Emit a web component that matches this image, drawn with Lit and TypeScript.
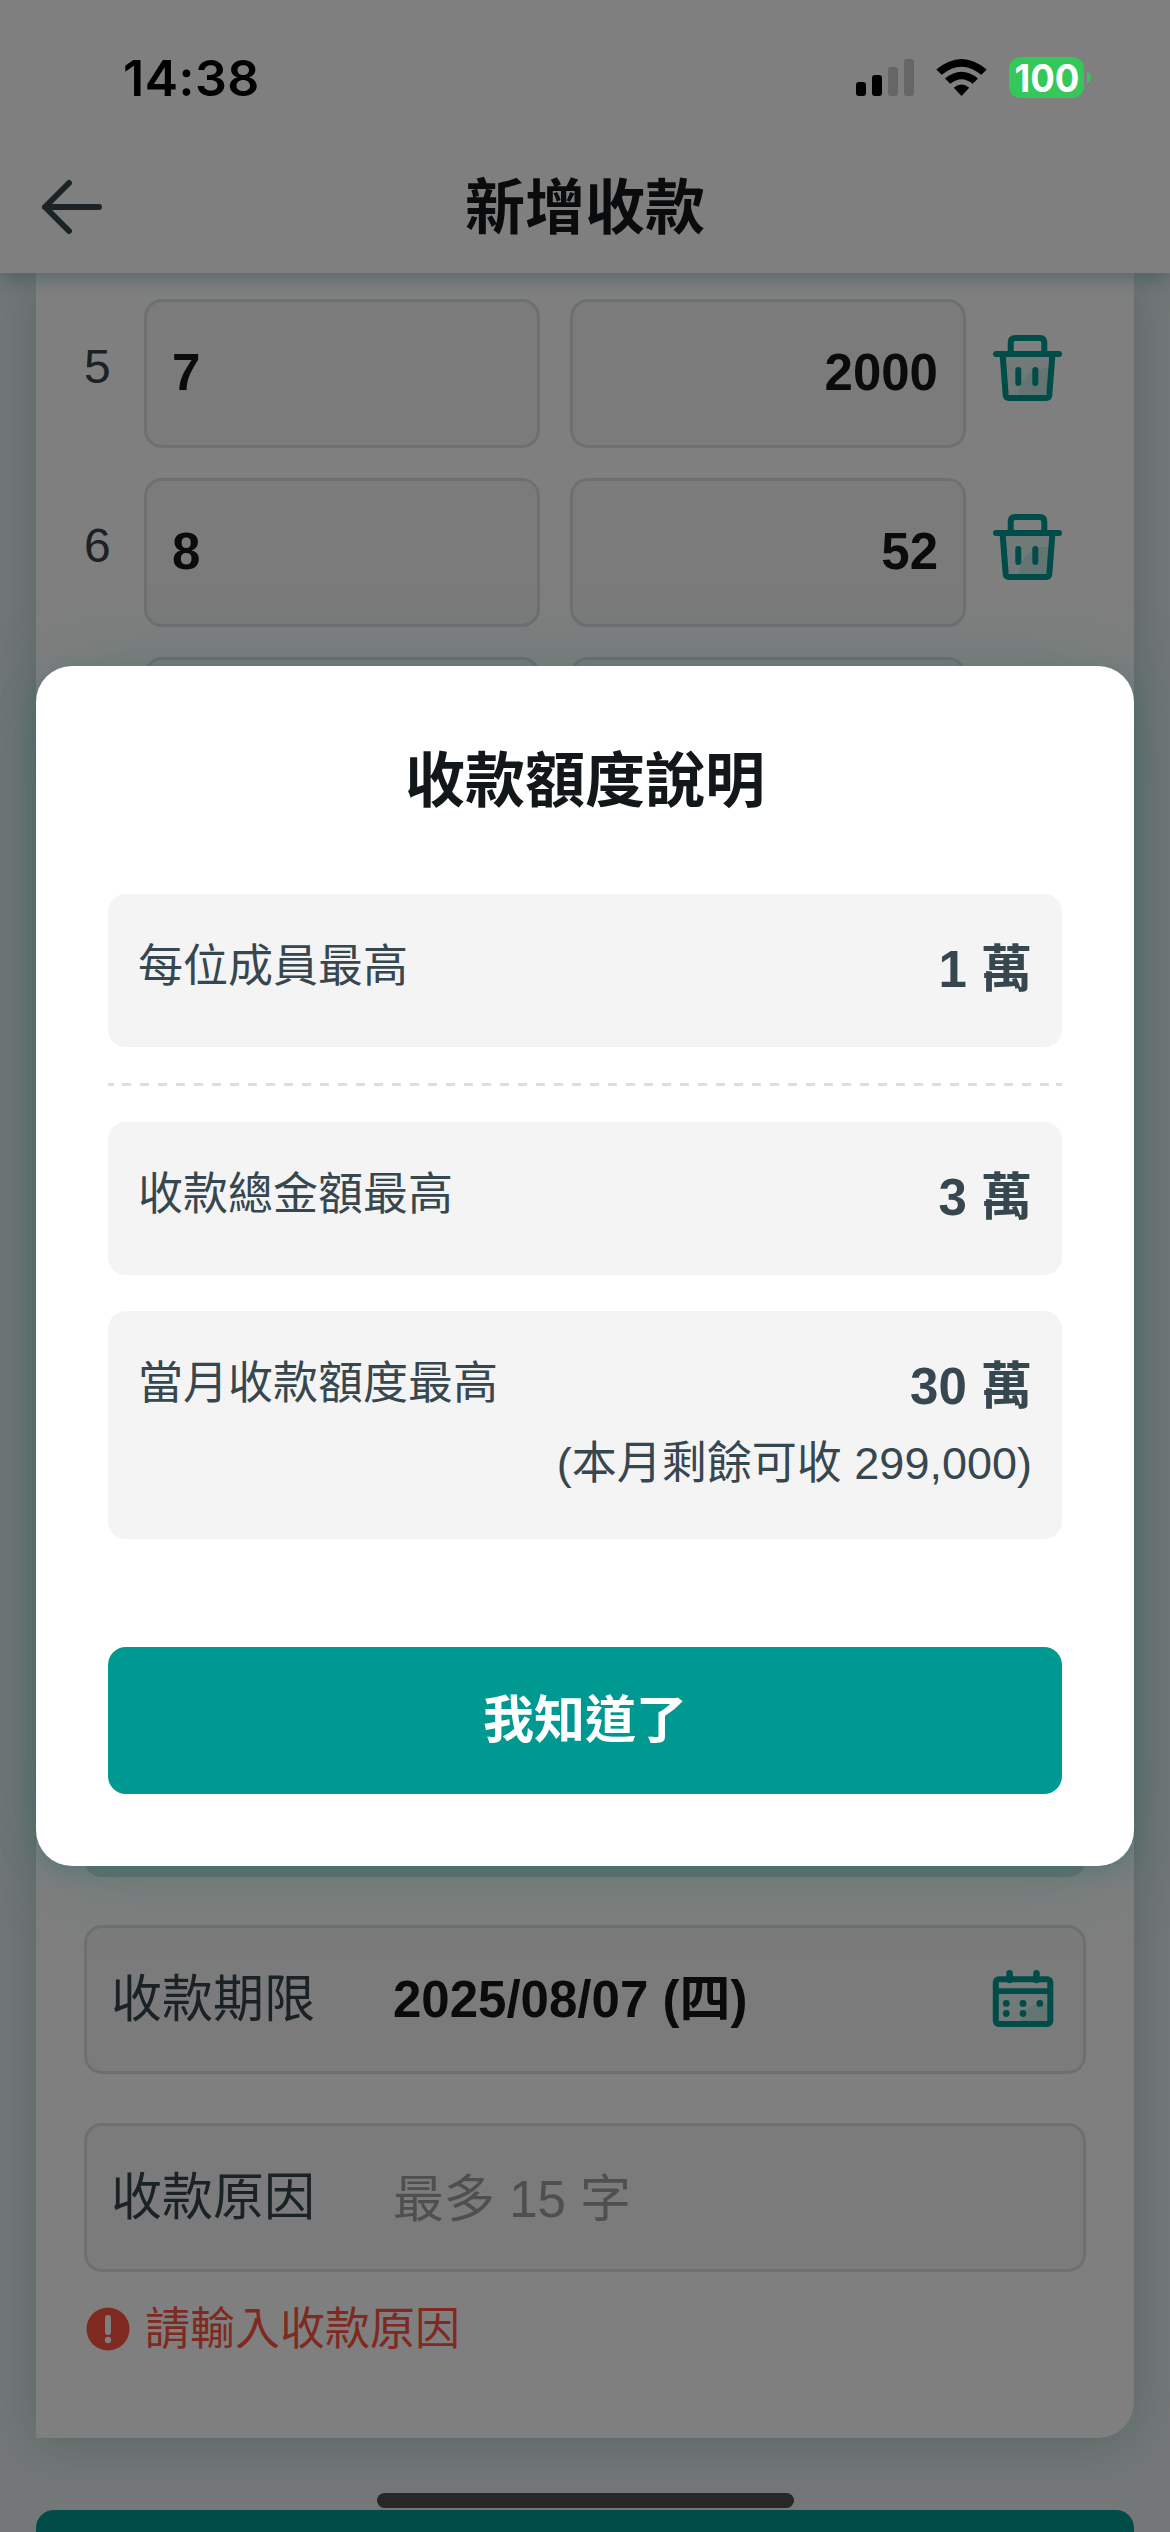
import { LitElement, html, css, svg } from "lit";
import { customElement, property } from "lit/decorators.js";

const FONT = css`"Liberation Sans", "Noto Sans CJK TC", sans-serif`;

const trashIcon = svg`
  <svg class="icon" width="100" height="100" viewBox="0 0 100 100" fill="none">
    <path d="M23 36h49.500l-3.500 42H26z" fill="#e4f5f3"/>
    <path d="M38.500 78C39 60 50 48 65 48h7L69 78z" fill="#c9e8e5"/>
    <path d="M30.700 34V22.500q0-4.500 4.500-4.500h24.600q4.500 0 4.500 4.500V34" stroke="#009991" stroke-width="6"/>
    <path d="M16 34H79" stroke="#009991" stroke-width="6" stroke-linecap="round"/>
    <path d="M22.700 36l3 39q.3 3 3 3h37.600q2.700 0 3-3l3-39" stroke="#009991" stroke-width="6"/>
    <path d="M38.300 50V63M55.300 50V63" stroke="#009991" stroke-width="6" stroke-linecap="round"/>
  </svg>`;

const calendarIcon = svg`
  <svg class="icon" width="100" height="100" viewBox="0 0 100 100" fill="none">
    <path d="M16 41h54v33H16z" fill="#e4f5f3"/>
    <path d="M39.500 74C41 61 51 53.500 64 53.500h6V74z" fill="#c9e8e5"/>
    <rect x="15.800" y="29.300" width="54.500" height="44.700" rx="3" stroke="#009991" stroke-width="6"/>
    <path d="M16 41.200H70" stroke="#009991" stroke-width="5.800"/>
    <path d="M29.600 23.300V30M56.500 23.300V30" stroke="#009991" stroke-width="6.500" stroke-linecap="round"/>
    <g fill="#009991"><circle cx="26.300" cy="53.400" r="3.400"/><circle cx="43" cy="53.400" r="3.400"/><circle cx="59.800" cy="53.400" r="3.400"/><circle cx="26.300" cy="63.500" r="3.400"/><circle cx="43" cy="63.500" r="3.400"/></g>
  </svg>`;

@customElement("status-bar")
export class StatusBar extends LitElement {
  static styles = css`
    :host { display: flex; height: 156px; box-sizing: border-box; padding: 54px 79px 0 123px; justify-content: space-between; align-items: flex-start; font-family: Inter, ${FONT}; }
    .time { font-size: 50px; font-weight: 600; line-height: 48px; color: #000; letter-spacing: 0.5px; }
    .right { display: flex; align-items: flex-start; }
  `;
  render() {
    return html`
      <span class="time">14:38</span>
      <svg class="right" width="236" height="46" viewBox="855 54 236 46">
        <rect x="856" y="82" width="10" height="14" rx="3"/>
        <rect x="872" y="75" width="10" height="21" rx="3"/>
        <rect x="888" y="67" width="10" height="29" rx="3" fill="#666"/>
        <rect x="904" y="59" width="10" height="37" rx="3" fill="#666"/>
        <path d="M936.300 69.500Q961.500 48.500 986.700 69.500L981.300 74.800Q961.500 58.500 941.700 74.800Z"/>
        <path d="M945 78.500Q961.500 65 978 78.500L972.700 83.800Q961.500 74.500 950.300 83.800Z"/>
        <path d="M953.800 87.800Q961.500 81 969.200 87.800L961.500 96Z"/>
        <rect x="1009" y="57" width="75" height="41" rx="11.500" fill="#34c759"/>
        <path d="M1087 72q4 1.500 4 5.500t-4 5.500z" fill="#34c759"/>
        <text x="1047" y="91.500" text-anchor="middle" font-size="38.500" font-weight="700" textLength="65" lengthAdjust="spacingAndGlyphs" fill="#fff">100</text>
      </svg>`;
  }
}

@customElement("member-row")
export class MemberRow extends LitElement {
  @property() no = "";
  @property() name = "";
  @property() amount = "";
  static styles = css`
    :host { display: flex; height: 149px; font-family: ${FONT}; }
    .no { width: 60px; font-size: 48px; line-height: 136px; color: #34454d; }
    .box { box-sizing: border-box; width: 396px; border: 3px solid #dae0e4; border-radius: 18px; background: #f6f6f6; padding: 0 25px; font-size: 51px; font-weight: 700; line-height: 141px; color: #121719; }
    .amount { margin-left: 30px; text-align: right; }
    .icon { margin: 21px 0 0 14px; flex: none; }
  `;
  render() {
    return html`<span class="no">${this.no}</span>
      <div class="box">${this.name}</div>
      <div class="box amount">${this.amount}</div>
      ${trashIcon}`;
  }
}

@customElement("limit-dialog")
export class LimitDialog extends LitElement {
  static styles = css`
    :host { display: flex; flex-direction: column; box-sizing: border-box; width: 1098px; height: 1200px; padding: 72px; background: #fff; border-radius: 36px; font-family: ${FONT}; color: #37474f; }
    h2 { margin: 0; height: 156px; text-align: center; font-size: 60px; line-height: 88px; color: #121719; }
    .item { box-sizing: border-box; height: 153px; padding: 37px 30px 0; background: #f4f4f4; border-radius: 18px; }
    .tall { height: 228px; margin-top: 36px; }
    .line { display: flex; justify-content: space-between; }
    .label { font-size: 45px; line-height: 72px; }
    .value { font-size: 51px; line-height: 78px; font-weight: 700; }
    .note { font-size: 45px; line-height: 75px; text-align: right; }
    .dash { height: 3px; margin: 36px 0; }
    button { margin-top: auto; height: 147px; border: 0; border-radius: 18px; background: #009991; color: #fff; font: 700 51px ${FONT}; padding: 0 0 10px; }
  `;
  render() {
    return html`
      <h2>收款額度說明</h2>
      <div class="item"><div class="line"><span class="label">每位成員最高</span><span class="value">1 萬</span></div></div>
      <svg class="dash" width="954" height="3"><path d="M0 1.500h6M14 1.500H949M948 1.500h6" stroke="#d8e0e4" stroke-width="3" stroke-dasharray="9 9"/></svg>
      <div class="item"><div class="line"><span class="label">收款總金額最高</span><span class="value">3 萬</span></div></div>
      <div class="item tall">
        <div class="line"><span class="label">當月收款額度最高</span><span class="value">30 萬</span></div>
        <div class="note">(本月剩餘可收 299,000)</div>
      </div>
      <button>我知道了</button>`;
  }
}

@customElement("app-root")
export class AppRoot extends LitElement {
  static styles = css`
    :host { display: block; position: relative; width: 1170px; height: 2532px; overflow: hidden; background: #e6eeee; font-family: ${FONT}; }
    .page { display: flex; flex-direction: column; height: 2532px; }
    header { position: relative; z-index: 1; flex: none; height: 273px; box-sizing: border-box; padding-top: 156px; background: #fff; box-shadow: 0 6px 18px rgba(0, 110, 110, 0.3); display: grid; grid-template-columns: 144px 1fr 144px; }
    header h1 { margin: 0; text-align: center; font-size: 60px; line-height: 105px; color: #121719; }
    .back { margin: 18px 0 0 36px; }
    main { flex: none; height: 2165px; margin: 0 36px; box-sizing: border-box; padding: 26px 48px 0; background: #fff; border-radius: 0 0 36px 0; box-shadow: 0 6px 48px rgba(0, 90, 80, 0.22); display: flex; flex-direction: column; }
    member-row { margin-bottom: 30px; flex: none; }
    .total { flex: none; height: 1041px; border-radius: 18px; background: #d2e2e1; margin-bottom: 48px; }
    .field { flex: none; display: flex; box-sizing: border-box; height: 149px; border: 3px solid #dae0e4; border-radius: 18px; background: #f6f6f6; padding: 0 24px; margin-bottom: 49px; font-size: 51px; line-height: 143px; color: #34454d; }
    .name { width: 282px; }
    .date { font-weight: 700; color: #121719; flex: 1; }
    .field .icon { flex: none; margin: 22px -21px 0 0; }
    .hint { color: #9e9e9e; line-height: 148px; }
    .error { display: flex; align-items: center; gap: 15px; margin-top: -15px; font-size: 45px; line-height: 48px; color: #ff5543; padding-left: 2px; }
    .error svg { margin-top: -2px; }
    .next { flex: none; height: 100px; margin: 72px 36px 0; border-radius: 18px; background: #009991; }
    .overlay { position: absolute; inset: 0; z-index: 2; background: rgba(0, 0, 0, 0.5); }
    status-bar { position: absolute; top: 0; left: 0; right: 0; z-index: 3; }
    limit-dialog { position: absolute; left: 36px; top: 666px; box-shadow: 0 6px 90px rgba(0, 100, 90, 0.2), 0 6px 18px rgba(0, 110, 100, 0.2); }
    .home { position: absolute; left: 377px; top: 2493px; width: 417px; height: 15px; border-radius: 8px; background: #272727; z-index: 3; }
  `;
  render() {
    return html`
      <div class="page">
        <header>
          <svg class="back" width="72" height="66" viewBox="36 174 72 66" fill="none" stroke="#37474f" stroke-width="6" stroke-linecap="round" stroke-linejoin="round"><path d="M69 183L45 207L69 231M45 207H99"/></svg>
          <h1>新增收款</h1>
        </header>
        <main>
          <member-row no="5" name="7" amount="2000"></member-row>
          <member-row no="6" name="8" amount="52"></member-row>
          <member-row></member-row>
          <div class="total"></div>
          <div class="field"><span class="name">收款期限</span><span class="date">2025/08/07 (四)</span>${calendarIcon}</div>
          <div class="field"><span class="name">收款原因</span><span class="hint">最多 15 字</span></div>
          <div class="error">
            <svg width="44" height="44" viewBox="0 0 44 44"><circle cx="22" cy="22" r="21.500" fill="#ff5543"/><path d="M22 11v14" stroke="#fff" stroke-width="6" stroke-linecap="round"/><circle cx="22" cy="33" r="3.200" fill="#fff"/></svg>
            <span>請輸入收款原因</span>
          </div>
        </main>
        <div class="next"></div>
      </div>
      <div class="overlay"><limit-dialog></limit-dialog></div>
      <status-bar></status-bar>
      <div class="home"></div>`;
  }
}
